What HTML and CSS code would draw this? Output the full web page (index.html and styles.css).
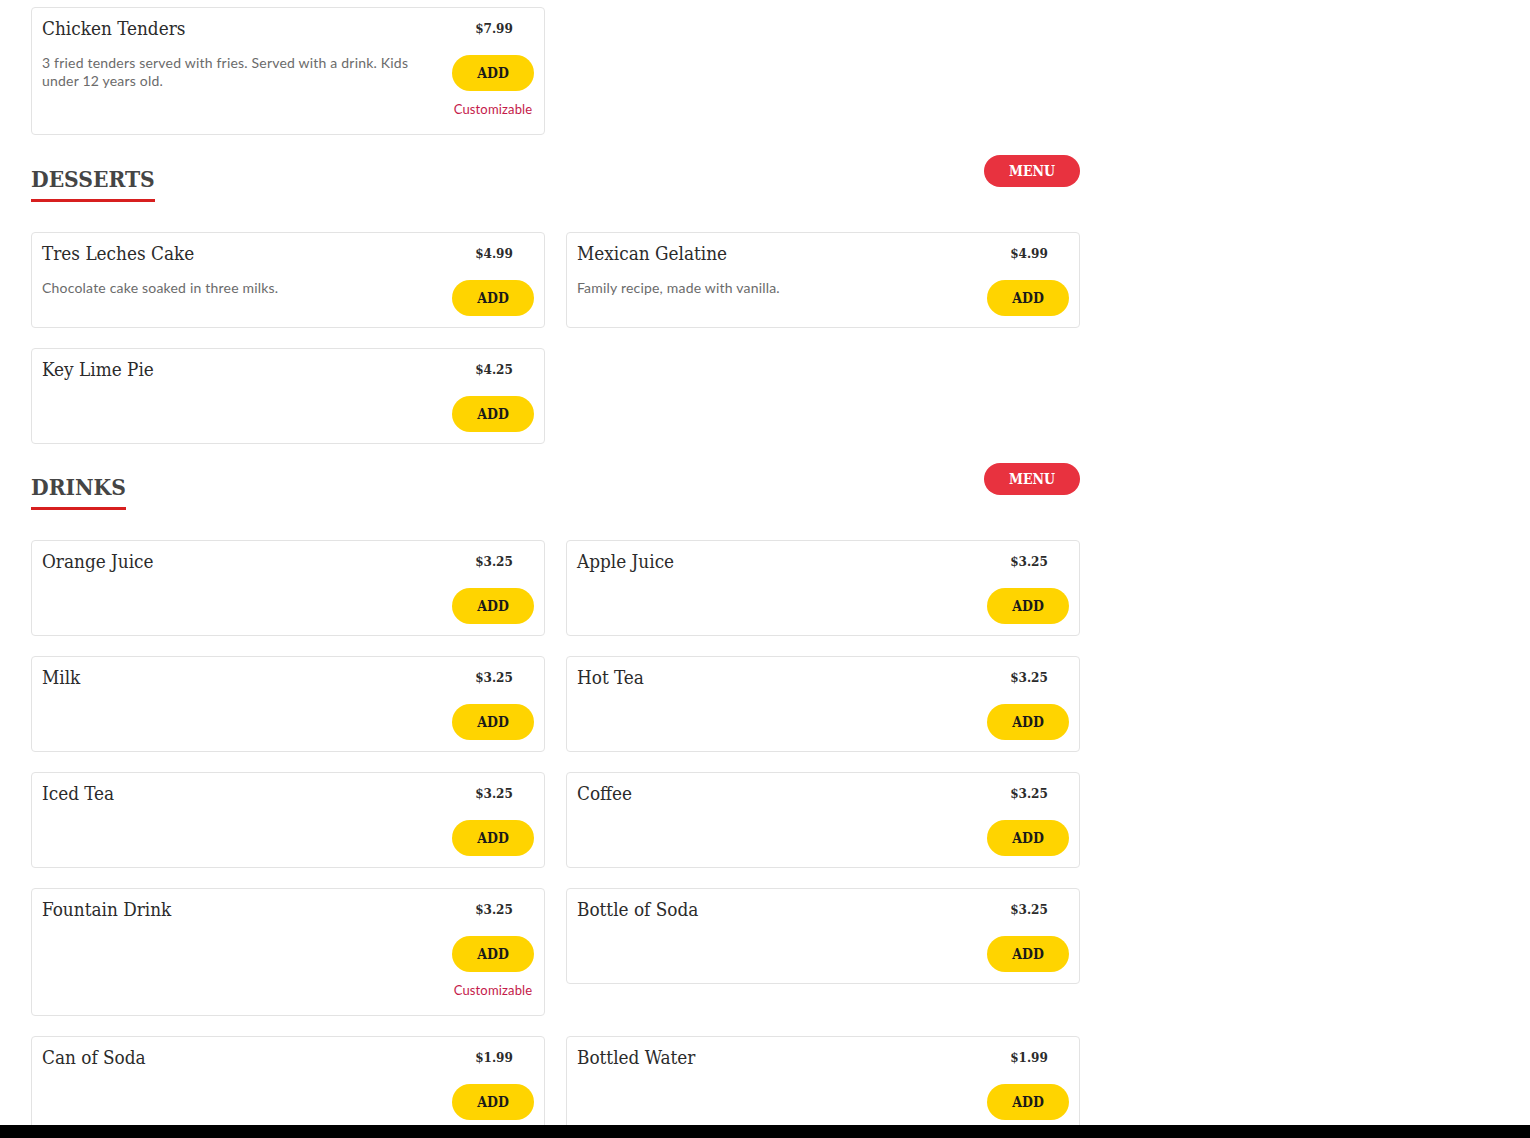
FILE: index.html
```html
<!DOCTYPE html>
<html lang="en">
<head>
<meta charset="utf-8">
<title>Menu</title>
<link rel="stylesheet" href="styles.css">
</head>
<body>
<main class="menu">
  <div class="grid">
    <div class="card">
      <div class="info">
        <h3 class="name">Chicken Tenders</h3>
        <p class="desc">3 fried tenders served with fries. Served with a drink. Kids under 12 years old.</p>
      </div>
      <div class="side">
        <div class="price">$7.99</div>
        <button class="add">ADD</button>
        <div class="custom">Customizable</div>
      </div>
    </div>
  </div>

  <section class="section">
    <div class="head">
      <h2 class="title">DESSERTS</h2>
      <button class="menu-btn">MENU</button>
    </div>
    <div class="grid">
      <div class="card">
        <div class="info">
          <h3 class="name">Tres Leches Cake</h3>
          <p class="desc">Chocolate cake soaked in three milks.</p>
        </div>
        <div class="side"><div class="price">$4.99</div><button class="add">ADD</button></div>
      </div>
      <div class="card">
        <div class="info">
          <h3 class="name">Mexican Gelatine</h3>
          <p class="desc">Family recipe, made with vanilla.</p>
        </div>
        <div class="side"><div class="price">$4.99</div><button class="add">ADD</button></div>
      </div>
      <div class="card">
        <div class="info"><h3 class="name">Key Lime Pie</h3></div>
        <div class="side"><div class="price">$4.25</div><button class="add">ADD</button></div>
      </div>
    </div>
  </section>

  <section class="section">
    <div class="head">
      <h2 class="title">DRINKS</h2>
      <button class="menu-btn">MENU</button>
    </div>
    <div class="grid">
      <div class="card">
        <div class="info"><h3 class="name">Orange Juice</h3></div>
        <div class="side"><div class="price">$3.25</div><button class="add">ADD</button></div>
      </div>
      <div class="card">
        <div class="info"><h3 class="name">Apple Juice</h3></div>
        <div class="side"><div class="price">$3.25</div><button class="add">ADD</button></div>
      </div>
      <div class="card">
        <div class="info"><h3 class="name">Milk</h3></div>
        <div class="side"><div class="price">$3.25</div><button class="add">ADD</button></div>
      </div>
      <div class="card">
        <div class="info"><h3 class="name">Hot Tea</h3></div>
        <div class="side"><div class="price">$3.25</div><button class="add">ADD</button></div>
      </div>
      <div class="card">
        <div class="info"><h3 class="name">Iced Tea</h3></div>
        <div class="side"><div class="price">$3.25</div><button class="add">ADD</button></div>
      </div>
      <div class="card">
        <div class="info"><h3 class="name">Coffee</h3></div>
        <div class="side"><div class="price">$3.25</div><button class="add">ADD</button></div>
      </div>
      <div class="card">
        <div class="info"><h3 class="name">Fountain Drink</h3></div>
        <div class="side"><div class="price">$3.25</div><button class="add">ADD</button><div class="custom">Customizable</div></div>
      </div>
      <div class="card">
        <div class="info"><h3 class="name">Bottle of Soda</h3></div>
        <div class="side"><div class="price">$3.25</div><button class="add">ADD</button></div>
      </div>
      <div class="card">
        <div class="info"><h3 class="name">Can of Soda</h3></div>
        <div class="side"><div class="price">$1.99</div><button class="add">ADD</button></div>
      </div>
      <div class="card">
        <div class="info"><h3 class="name">Bottled Water</h3></div>
        <div class="side"><div class="price">$1.99</div><button class="add">ADD</button></div>
      </div>
    </div>
  </section>
</main>
<div class="bottom-bar"></div>
</body>
</html>
```

FILE: styles.css
```css
html, body {
  margin: 0;
  padding: 0;
  background: #ffffff;
}

body {
  font-family: "Lato", "Noto Sans", sans-serif;
  color: #333333;
  overflow: hidden;
  height: 1138px;
}

.menu {
  width: 1049px;
  margin-left: 31px;
  padding-top: 7px;
}

.grid {
  display: grid;
  grid-template-columns: 514px 514px;
  column-gap: 21px;
  row-gap: 20px;
  align-items: start;
}

.card {
  box-sizing: border-box;
  border: 1px solid #e3e3e3;
  border-radius: 4px;
  background: #fff;
  display: flex;
  justify-content: space-between;
  padding: 10px 10px 11px 10px;
}

.info {
  flex: 1;
  min-width: 0;
  padding-right: 36px;
}

.name {
  margin: 0;
  font-family: "DejaVu Serif", serif;
  font-stretch: condensed;
  font-weight: normal;
  font-size: 18.8px;
  line-height: 22px;
  color: #2b2b2b;
}

.desc {
  margin: 14px 0 0 0;
  font-size: 14px;
  line-height: 18px;
  letter-spacing: 0.2px;
  color: #6b6b6b;
}

.side {
  width: 82px;
  display: flex;
  flex-direction: column;
  align-items: center;
}

.price {
  font-family: "DejaVu Serif", serif;
  font-stretch: condensed;
  font-weight: bold;
  font-size: 13.4px;
  line-height: 21px;
  color: #2b2b2b;
  padding-left: 2px;
}

.add {
  margin-top: 16px;
  width: 82px;
  height: 36px;
  border: none;
  border-radius: 18px;
  background: #ffd400;
  font-family: "DejaVu Serif", serif;
  font-stretch: condensed;
  font-weight: bold;
  font-size: 14px;
  color: #1a1a1a;
  padding: 0;
}

.custom {
  margin-top: 8px;
  margin-bottom: 4px;
  font-size: 13px;
  line-height: 20px;
  color: #c41a4a;
  letter-spacing: 0.15px;
  white-space: nowrap;
}

.section {
  margin-top: 20px;
}

.section + .section {
  margin-top: 19px;
}

.head {
  display: flex;
  justify-content: space-between;
  align-items: flex-start;
  margin-bottom: 30px;
}

.title {
  margin: 0;
  padding-top: 9px;
  padding-bottom: 4px;
  font-family: "DejaVu Serif", serif;
  font-stretch: condensed;
  font-weight: bold;
  font-size: 22.6px;
  line-height: 31px;
  color: #454545;
  border-bottom: 3px solid #d71f1f;
}

.menu-btn {
  width: 96px;
  height: 32px;
  border: none;
  border-radius: 16px;
  background: #e8323f;
  color: #ffffff;
  font-family: "DejaVu Serif", serif;
  font-stretch: condensed;
  font-weight: bold;
  font-size: 14px;
  padding: 0;
}

.bottom-bar {
  position: fixed;
  left: 0;
  right: 0;
  bottom: 0;
  height: 13px;
  background: #000000;
}
```
